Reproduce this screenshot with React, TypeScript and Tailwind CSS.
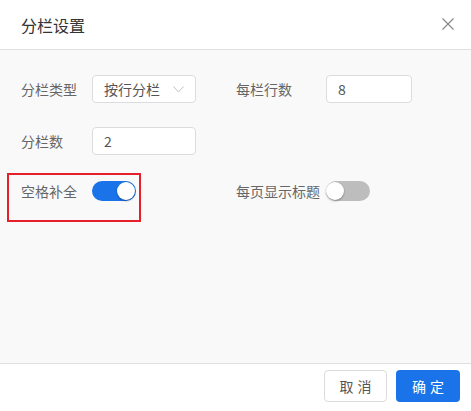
import React, { useState } from 'react'

const font = { fontFamily: '"Microsoft YaHei", "Noto Sans CJK SC", "Liberation Sans", sans-serif' }

const Toggle: React.FC<{ on: boolean; onChange: () => void }> = ({ on, onChange }) => (
  <button
    onClick={onChange}
    className={`relative w-[44px] h-[20px] rounded-full ${on ? 'bg-[#1a73e8]' : 'bg-[#bdbdbd]'}`}
  >
    <span
      className={`absolute top-[1px] w-[18px] h-[18px] rounded-full bg-white shadow-[0_1px_2px_rgba(0,0,0,0.35)] ${
        on ? 'left-[25px]' : 'left-[0px]'
      }`}
    />
  </button>
)

export default function App() {
  const [fillBlank, setFillBlank] = useState(true)
  const [showTitle, setShowTitle] = useState(false)

  return (
    <div className="w-[471px] h-[411px] flex flex-col bg-white" style={font}>
      {/* Header */}
      <div className="h-[50px] flex items-center justify-between pl-[21px] pr-[17px] border-b border-[#e0e0e0]">
        <span className="text-[16px] text-[#333]">分栏设置</span>
        <svg width="12" height="12" viewBox="0 0 12 12" className="mb-[2px]">
          <path d="M0.5 0.5 L11.5 11.5 M11.5 0.5 L0.5 11.5" stroke="#8a8a8a" strokeWidth="1.2" />
        </svg>
      </div>

      {/* Body */}
      <div className="flex-1 bg-[#f9f9f9] pl-[21px] pt-[25px] text-[14px] text-[#666] relative">
        <div className="flex h-[28px]">
          <div className="w-[215px] flex items-center">
            <span className="w-[71px]">分栏类型</span>
            <div className="w-[104px] h-[28px] bg-white border border-[#dcdcdc] rounded-[4px] flex items-center justify-between pl-[11px] pr-[11px] text-[#555]">
              <span>按行分栏</span>
              <svg width="11" height="7" viewBox="0 0 11 7">
                <path d="M0.5 0.5 L5.5 6 L10.5 0.5" fill="none" stroke="#c0c0c0" strokeWidth="1" />
              </svg>
            </div>
          </div>
          <div className="flex items-center">
            <span className="w-[90px]">每栏行数</span>
            <div className="w-[86px] h-[28px] bg-white border border-[#dcdcdc] rounded-[4px] flex items-center pl-[11px] text-[#555]">
              8
            </div>
          </div>
        </div>

        <div className="flex h-[28px] mt-[24px]">
          <div className="w-[215px] flex items-center">
            <span className="w-[71px]">分栏数</span>
            <div className="w-[104px] h-[28px] bg-white border border-[#dcdcdc] rounded-[4px] flex items-center pl-[11px] text-[#555]">
              2
            </div>
          </div>
        </div>

        <div className="flex h-[28px] mt-[22px]">
          <div className="w-[215px] flex items-center">
            <span className="w-[71px]">空格补全</span>
            <Toggle on={fillBlank} onChange={() => setFillBlank(!fillBlank)} />
          </div>
          <div className="flex items-center">
            <span className="w-[90px]">每页显示标题</span>
            <Toggle on={showTitle} onChange={() => setShowTitle(!showTitle)} />
          </div>
        </div>

        {/* highlight annotation */}
        <div className="absolute left-[7px] top-[123px] w-[134px] h-[49px] border-2 border-[#e5202a] pointer-events-none" />
      </div>

      {/* Footer */}
      <div className="h-[48px] border-t border-[#e0e0e0] flex items-center justify-end gap-[9px] pr-[11px] pb-[3px]">
        <button className="w-[63px] h-[32px] bg-white border border-[#dcdcdc] rounded-[4px] text-[14px] text-[#555] tracking-[4px] pl-[4px]">
          取消
        </button>
        <button className="w-[64px] h-[32px] bg-[#1a73e8] rounded-[4px] text-[14px] text-white tracking-[4px] pl-[4px]">
          确定
        </button>
      </div>
    </div>
  )
}
